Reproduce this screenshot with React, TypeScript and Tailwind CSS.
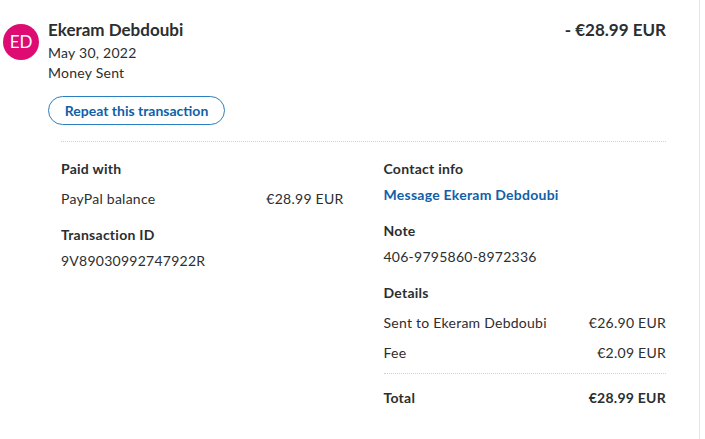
export default function App() {
  const font = { fontFamily: 'Lato, "Open Sans", sans-serif' };
  return (
    <div style={font} className="w-[705px] h-[439px] bg-white text-[#2c2e2f] overflow-hidden">
      <div className="w-[700px] h-full border-r border-[#e6e6e6]">
        {/* header */}
        <div className="flex justify-between pt-[20px] pl-[3px] pr-[33px]">
          <div className="flex gap-[9px]">
            <div className="mt-[4px] w-[36px] h-[36px] rounded-full bg-[#de0b72] text-white flex items-center justify-center text-[17px]">
              ED
            </div>
            <div className="flex flex-col">
              <div className="text-[17px] leading-[20px] font-bold">Ekeram Debdoubi</div>
              <div className="text-[14px] leading-[20px] tracking-[0.25px] mt-[3px]">May 30, 2022</div>
              <div className="text-[14px] leading-[20px] tracking-[0.25px]">Money Sent</div>
              <button className="mt-[13px] w-[177px] h-[29px] rounded-full border border-[#2a7fc0] text-[#1060a8] text-[14px] font-bold">
                Repeat this transaction
              </button>
            </div>
          </div>
          <div className="text-[17px] leading-[20px] font-bold">- €28.99 EUR</div>
        </div>

        <div className="ml-[61px] mr-[33px] mt-[16px] border-t border-dotted border-[#d0d0d0]" />

        {/* body */}
        <div className="ml-[61px] mr-[33px] grid grid-cols-2 gap-[40px] pt-[17px] text-[14px] leading-[20px] tracking-[0.25px]">
          <div className="flex flex-col">
            <div className="font-bold">Paid with</div>
            <div className="flex justify-between mt-[10px]">
              <span>PayPal balance</span>
              <span>€28.99 EUR</span>
            </div>
            <div className="font-bold mt-[16px]">Transaction ID</div>
            <div className="mt-[6px]">9V89030992747922R</div>
          </div>
          <div className="flex flex-col">
            <div className="font-bold">Contact info</div>
            <div className="font-bold text-[#1060a8] mt-[6px]">Message Ekeram Debdoubi</div>
            <div className="font-bold mt-[16px]">Note</div>
            <div className="mt-[6px]">406-9795860-8972336</div>
            <div className="font-bold mt-[16px]">Details</div>
            <div className="flex justify-between mt-[10px]">
              <span>Sent to Ekeram Debdoubi</span>
              <span>€26.90 EUR</span>
            </div>
            <div className="flex justify-between mt-[10px]">
              <span>Fee</span>
              <span>€2.09 EUR</span>
            </div>
            <div className="mt-[10px] border-t border-dotted border-[#d0d0d0]" />
            <div className="flex justify-between mt-[14px] font-bold">
              <span>Total</span>
              <span>€28.99 EUR</span>
            </div>
          </div>
        </div>
      </div>
    </div>
  );
}
